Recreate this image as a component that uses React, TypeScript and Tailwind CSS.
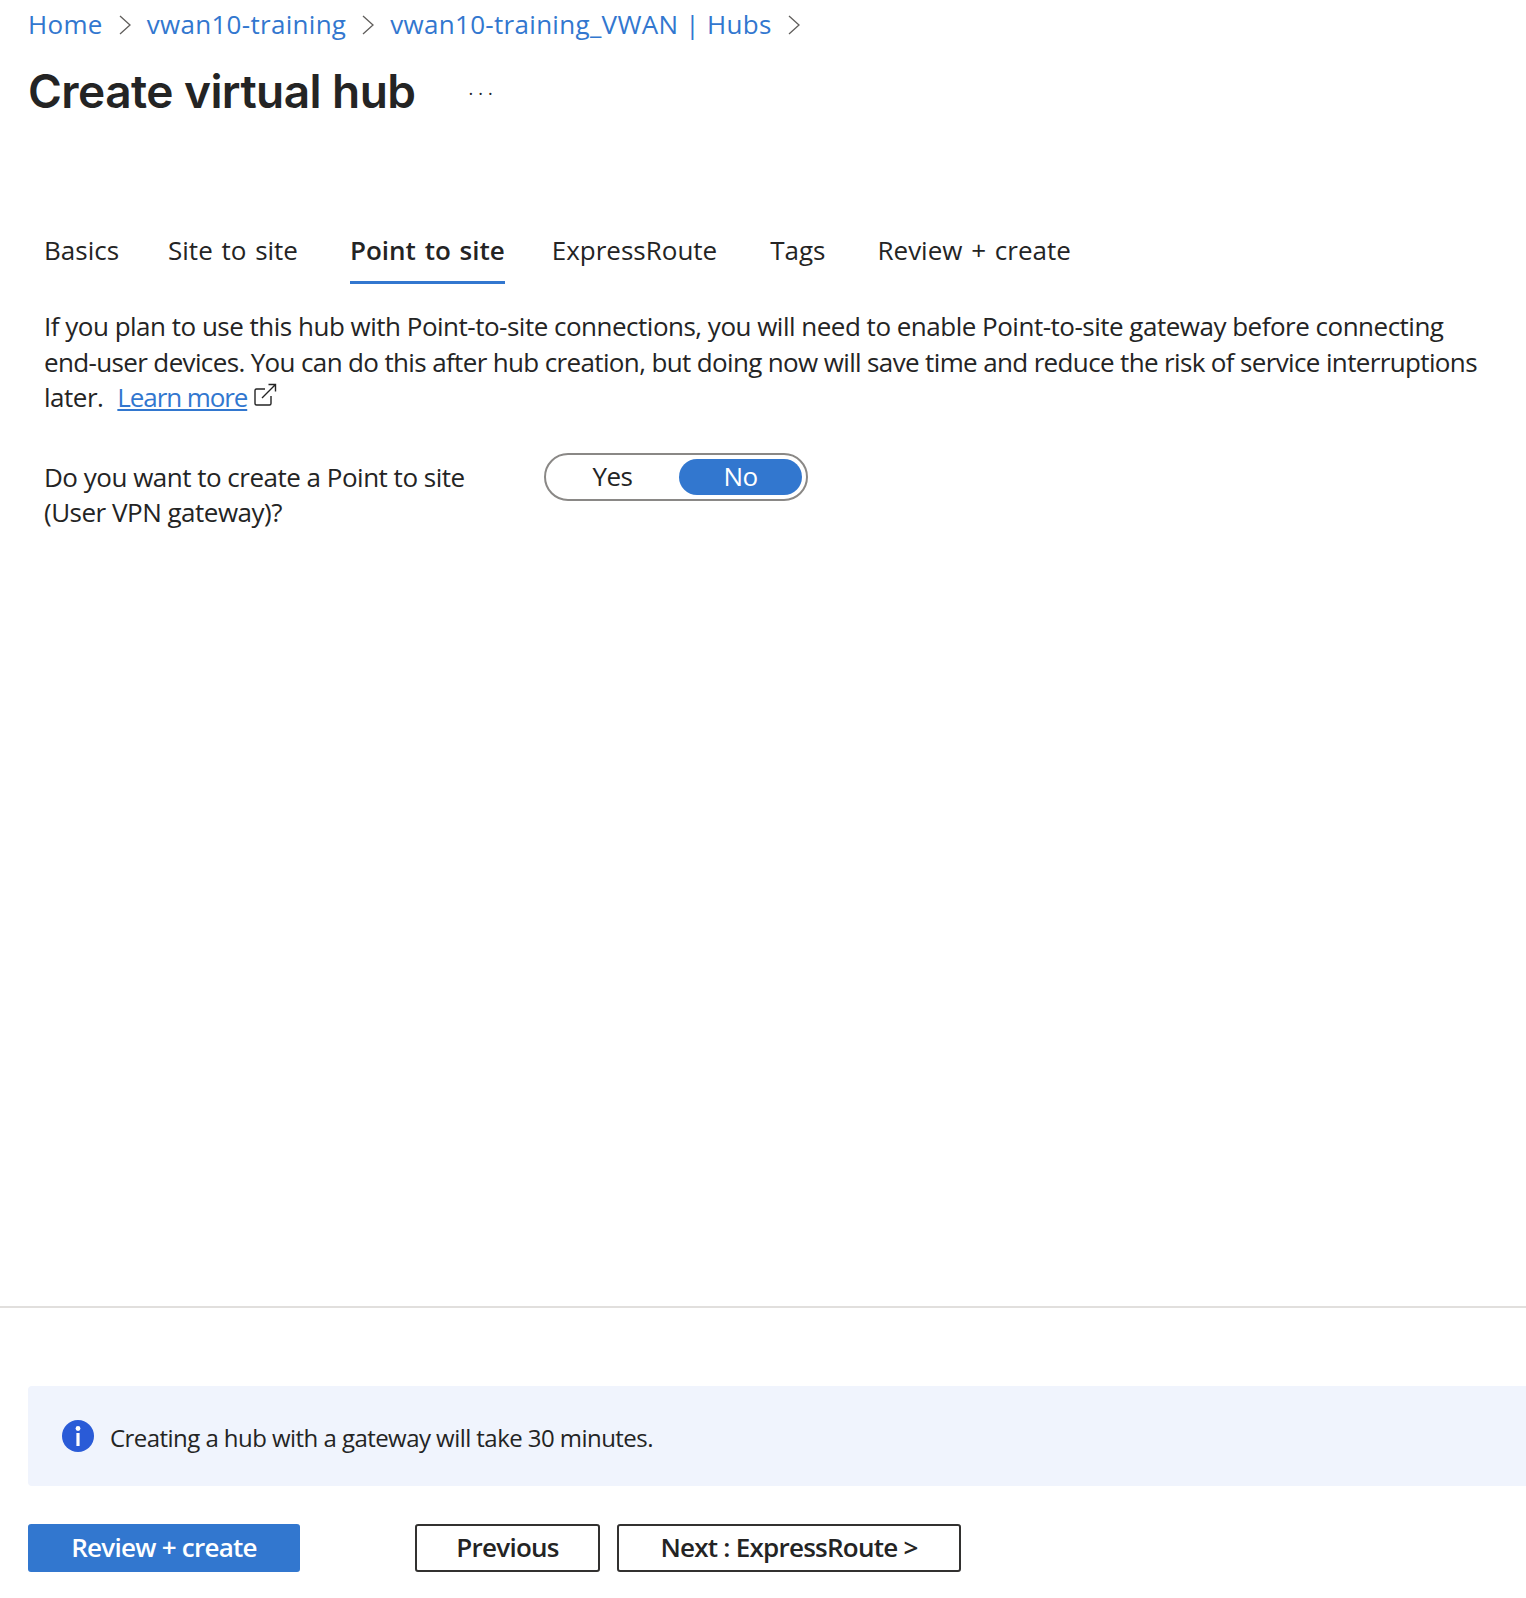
const font = "font-['Open_Sans','Noto_Sans',sans-serif]";

const crumbs = ["Home", "vwan10-training", "vwan10-training_VWAN | Hubs"];
const tabs = [
  { label: "Basics", className: "" },
  { label: "Site to site", className: "-ml-[1px]" },
  { label: "Point to site", className: "ml-[2px]" },
  { label: "ExpressRoute", className: "-ml-[3px]" },
  { label: "Tags", className: "ml-[3px]" },
  { label: "Review + create", className: "ml-[2px]" },
];

function Chevron() {
  return (
    <svg width="14" height="22" viewBox="0 0 14 22" fill="none" className="mx-[15px] shrink-0">
      <path d="M2 2l10 9-10 9" stroke="#605e5c" strokeWidth="1.3" />
    </svg>
  );
}

function InfoIcon() {
  return (
    <svg width="32" height="32" viewBox="0 0 32 32" className="shrink-0">
      <circle cx="16" cy="16" r="16" fill="#2a5bd7" />
      <circle cx="16" cy="8.5" r="2.4" fill="#fff" />
      <rect x="14.4" y="13" width="3.2" height="13" fill="#fff" />
    </svg>
  );
}

function LinkOutIcon() {
  return (
    <svg width="24" height="24" viewBox="0 0 24 24" fill="none" stroke="#242424" strokeWidth="1.4" className="ml-[6px] inline-block align-[0px]">
      <path d="M12 6H3.500A1.500 1.500 0 0 0 2 7.500v13A1.500 1.500 0 0 0 3.500 22h13a1.500 1.500 0 0 0 1.500-1.500V13" />
      <path d="M9 15L22.500 1.500M15.500 1.500h7v7" />
    </svg>
  );
}

export default function App() {
  return (
    <div className={`${font} h-[1598px] w-full overflow-hidden bg-white text-[#242424]`}>
      {/* Breadcrumb */}
      <nav className="flex h-[49px] items-center pl-[28px] text-[26px] tracking-[0.3px] text-[#3277cf]">
        {crumbs.map((crumb) => (
          <div key={crumb} className="flex items-center">
            <span>{crumb}</span>
            <Chevron />
          </div>
        ))}
      </nav>

      {/* Title */}
      <div className="flex h-[85px] items-center pl-[28px]">
        <h1 className="font-['Inter',sans-serif] text-[46px] font-semibold tracking-[-0.55px]">Create virtual hub</h1>
        <span className="mb-[8px] ml-[53px] text-[18px] leading-none tracking-[5px]">...</span>
      </div>

      {/* Tabs */}
      <div className="mt-[86px] flex h-[64px] gap-[50px] pl-[44px] text-[26px] [word-spacing:2px]">
        {tabs.map((tab) => (
          <div key={tab.label} className={tab.className}>
            <div
              className={
                tab.label === "Point to site"
                  ? "flex h-[64px] items-center border-b-[3px] border-[#3277cf] font-semibold"
                  : "flex h-[64px] items-center pb-[3px]"
              }
            >
              {tab.label}
            </div>
          </div>
        ))}
      </div>

      {/* Body */}
      <div className="pl-[44px] pr-[30px] pt-[25px] text-[26px] leading-[35.5px] tracking-[-0.5px]">
        <p>
          <span className="block">
            If you plan to use this hub with Point-to-site connections, you will need to enable Point-to-site gateway before connecting
          </span>
          <span className="block tracking-[-0.64px]">
            end-user devices. You can do this after hub creation, but doing now will save time and reduce the risk of service interruptions
          </span>
          <span className="block">
            later.
            <a className="ml-[14px] tracking-[-1.1px] text-[#3277cf] underline">Learn more</a>
            <LinkOutIcon />
          </span>
        </p>

        <div className="mt-[37px] flex">
          <label className="w-[500px] pt-[7px]">
            Do you want to create a Point to site
            <br />
            (User VPN gateway)?
          </label>
          <div className="flex h-[48px] w-[264px] items-center rounded-full border-2 border-[#8a8886] p-[4px]">
            <div className="flex h-full w-[126px] items-center justify-center">Yes</div>
            <div className="ml-[4px] flex h-full w-[124px] items-center justify-center rounded-full bg-[#3277cf] text-white">No</div>
          </div>
        </div>
      </div>

      {/* Footer */}
      <div className="mt-[775px] border-t-2 border-[#e1dfdd] pl-[28px] pt-[78px]">
        <div className="flex h-[100px] items-center gap-[16px] rounded-l bg-[#f0f4fd] pl-[34px] text-[24px] tracking-[-0.55px]">
          <InfoIcon />
          <span className="pt-[4px]">Creating a hub with a gateway will take 30 minutes.</span>
        </div>
        <div className="mt-[38px] flex text-[26px] font-semibold tracking-[-0.75px]">
          <button className="h-[48px] w-[272px] rounded-[3px] bg-[#3277cf] text-white">Review + create</button>
          <button className="ml-[115px] h-[48px] w-[185px] rounded-[3px] border-2 border-[#323130]">Previous</button>
          <button className="ml-[17px] h-[48px] w-[344px] rounded-[3px] border-2 border-[#323130]">Next : ExpressRoute &gt;</button>
        </div>
      </div>
    </div>
  );
}
